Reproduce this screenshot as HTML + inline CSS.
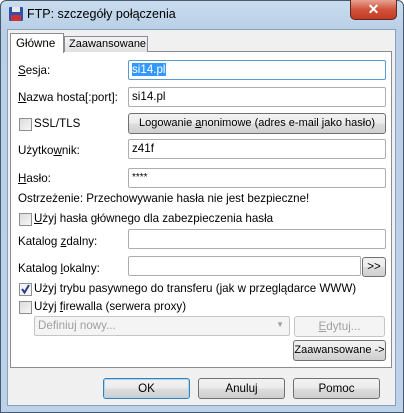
<!DOCTYPE html><html><head><meta charset="utf-8"><style>
*{box-sizing:border-box}
body{margin:0;width:404px;height:413px;overflow:hidden;background:#fff;font-family:"Liberation Sans",sans-serif;font-size:11.6px;color:#000}
.win{position:absolute;left:0;top:0;width:404px;height:413px;border:1px solid #4a5a6e;border-radius:6px 6px 0 0;background:linear-gradient(#c9dcef,#b9cfe6 30px,#bcd2e8)}
.client{position:absolute;left:7px;top:29px;width:389px;height:377px;background:#f0f0f0;border:1px solid #8aa0b8}
.a{position:absolute;white-space:nowrap}
.title{left:27px;top:7px;font-size:12.5px;color:#000}
.close{left:350px;top:0;width:47px;height:20px;border:1px solid #5a2a22;border-top:none;border-radius:0 0 5px 5px;background:linear-gradient(#e8a394,#d0533c 50%,#c43a22);color:#fff;text-align:center;font-weight:bold;font-size:14px;line-height:18px}
.panel{left:10px;top:51px;width:382px;height:317px;background:#fff;border:1px solid #898c95}
.tab{border:1px solid #898c95;border-bottom:none;background:linear-gradient(#f4f4f4,#e0e0e0);padding:2px 4px}
.inp{position:absolute;height:20px;border:1px solid #abadb3;background:#fff;padding:2px 3px;border-radius:2px;white-space:nowrap}
.btn{position:absolute;height:21px;border:1px solid #707070;border-radius:3px;background:linear-gradient(#f2f2f2,#ebebeb 50%,#dddddd 51%,#cfcfcf);text-align:center;line-height:19px;white-space:nowrap;padding:0}
.cb{position:absolute;width:13px;height:13px;border:1px solid #8e8f8f;background:linear-gradient(135deg,#dcdcdc,#f6f6f6)}
.l{position:absolute;white-space:nowrap}
u{text-decoration:underline}
.dis{color:#a0a0a0}
</style></head><body>
<div class="win"></div>
<svg class="a" style="left:8px;top:6px" width="16" height="16"><rect x="1" y="1" width="14" height="14" rx="1" fill="#3050a8"/><rect x="4" y="1" width="8" height="5" fill="#e8e8e8"/><rect x="3" y="9" width="10" height="6" fill="#d03030"/></svg>
<div class="a title">FTP: szczegóły połączenia</div>
<div class="a close">✕</div>
<div class="client"></div>
<div class="a panel"></div>
<div class="a tab" style="left:64px;top:36px;width:84px;height:16px;padding:1px 0 0 4px;font-size:11px">Zaawansowane</div>
<div class="a" style="left:10px;top:33px;width:54px;height:20px;border:1px solid #898c95;border-bottom:none;background:#fff;padding:3px 5px">Główne</div>

<div class="l" style="left:18px;top:64px"><u>S</u>esja:</div>
<div class="inp" style="left:128px;top:60px;width:258px;border-color:#5b9bd5"><span style="background:#3399ff;color:#fff">si14.pl</span></div>
<div class="l" style="left:18px;top:91px"><u>N</u>azwa hosta[:port]:</div>
<div class="inp" style="left:128px;top:87px;width:258px">si14.pl</div>
<div class="cb" style="left:19px;top:118px"></div>
<div class="l" style="left:34px;top:117px">SSL/TLS</div>
<div class="btn" style="left:128px;top:113px;width:258px;font-size:11px">Logowanie <u>a</u>nonimowe (adres e-mail jako hasło)</div>
<div class="l" style="left:18px;top:144px">Użytko<u>w</u>nik:</div>
<div class="inp" style="left:128px;top:139px;width:258px">z41f</div>
<div class="l" style="left:18px;top:172px"><u>H</u>asło:</div>
<div class="inp" style="left:128px;top:168px;width:258px;font-size:10px;padding-top:3px">****</div>
<div class="l" style="left:18px;top:192px">Ostrzeżenie: Przechowywanie hasła nie jest bezpieczne!</div>
<div class="cb" style="left:19px;top:213px"></div>
<div class="l" style="left:34px;top:212px"><u>U</u>żyj hasła głównego dla zabezpieczenia hasła</div>
<div class="l" style="left:18px;top:235px">Katalog <u>z</u>dalny:</div>
<div class="inp" style="left:128px;top:229px;width:258px"></div>
<div class="l" style="left:18px;top:262px">Katalog <u>l</u>okalny:</div>
<div class="inp" style="left:128px;top:256px;width:233px"></div>
<div class="btn" style="left:362px;top:257px;width:24px;height:20px;line-height:18px">&gt;&gt;</div>
<div class="cb" style="left:19px;top:283px;background:#f4f4f4"><svg width="11" height="11" style="position:absolute;left:0;top:0"><path d="M2 5l2.5 3.5L9 1" stroke="#2a3c8c" stroke-width="2" fill="none"/></svg></div>
<div class="l" style="left:34px;top:282px">Użyj trybu pasywnego do transferu (jak w przeglądarce WWW)</div>
<div class="cb" style="left:19px;top:301px"></div>
<div class="l" style="left:34px;top:300px">Użyj <u>f</u>irewalla (serwera proxy)</div>
<div class="inp dis" style="left:34px;top:316px;width:256px;background:#f4f4f4;border-color:#c5c5c5">Definiuj nowy...<span style="position:absolute;right:5px;top:3px;font-size:8px">▼</span></div>
<div class="btn dis" style="left:294px;top:316px;width:91px;background:#f4f4f4;border-color:#c5c5c5"><u>E</u>dytuj...</div>
<div class="btn" style="left:293px;top:340px;width:93px;font-size:11px">Zaawansowane -&gt;</div>

<div class="btn" style="left:103px;top:378px;width:87px;height:21px;border-color:#3c7fb1;box-shadow:inset 0 0 0 1px #a6d8f5">OK</div>
<div class="btn" style="left:198px;top:378px;width:87px">Anuluj</div>
<div class="btn" style="left:293px;top:378px;width:87px">Pomoc</div>
</body></html>
